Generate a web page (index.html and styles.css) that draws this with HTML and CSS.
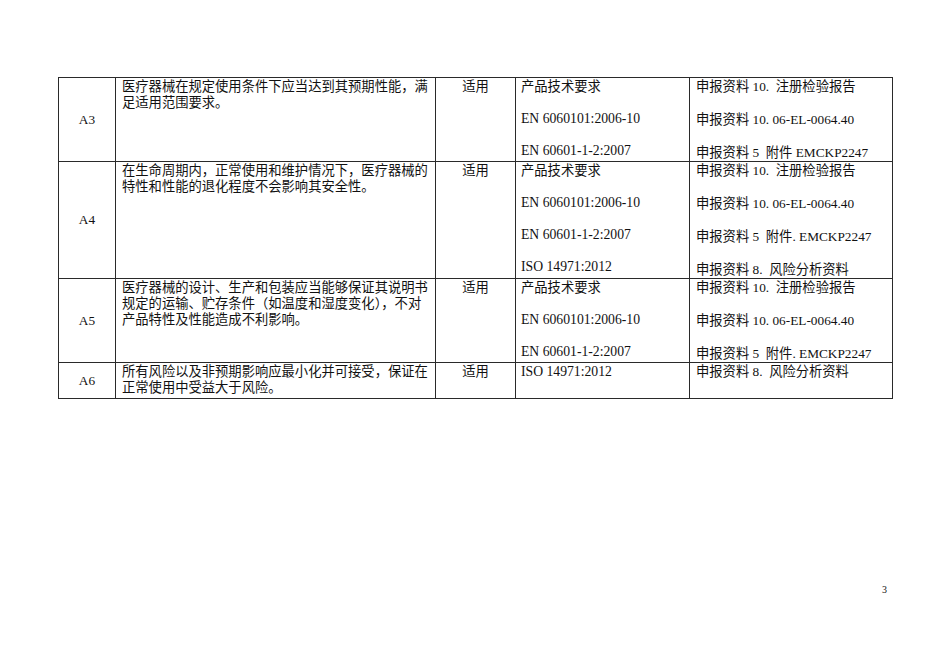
FILE: index.html
```html
<!DOCTYPE html>
<html lang="zh-CN">
<head>
<meta charset="utf-8">
<title>符合性对照表</title>
<link rel="stylesheet" href="styles.css">
</head>
<body>
<div class="page">
  <table class="grid">
    <colgroup>
      <col class="c-id">
      <col class="c-desc">
      <col class="c-app">
      <col class="c-std">
      <col class="c-doc">
    </colgroup>
    <tbody>
      <tr class="r-a3">
        <td class="id">A3</td>
        <td class="desc">医疗器械在规定使用条件下应当达到其预期性能，满<br>足适用范围要求。</td>
        <td class="app">适用</td>
        <td class="std"><p>产品技术要求</p><p class="lat">EN 6060101:2006-10</p><p class="lat">EN 60601-1-2:2007</p></td>
        <td class="doc"><p>申报资料 10.&nbsp; 注册检验报告</p><p>申报资料 10. 06-EL-0064.40</p><p class="last">申报资料 5&nbsp; 附件 EMCKP2247</p></td>
      </tr>
      <tr class="r-a4">
        <td class="id">A4</td>
        <td class="desc">在生命周期内，正常使用和维护情况下，医疗器械的<br>特性和性能的退化程度不会影响其安全性。</td>
        <td class="app">适用</td>
        <td class="std"><p>产品技术要求</p><p class="lat">EN 6060101:2006-10</p><p class="lat">EN 60601-1-2:2007</p><p class="lat">ISO 14971:2012</p></td>
        <td class="doc"><p>申报资料 10.&nbsp; 注册检验报告</p><p>申报资料 10. 06-EL-0064.40</p><p>申报资料 5&nbsp; 附件. EMCKP2247</p><p class="last">申报资料 8.&nbsp; 风险分析资料</p></td>
      </tr>
      <tr class="r-a5">
        <td class="id">A5</td>
        <td class="desc">医疗器械的设计、生产和包装应当能够保证其说明书<br>规定的运输、贮存条件（如温度和湿度变化），不对<br>产品特性及性能造成不利影响。</td>
        <td class="app">适用</td>
        <td class="std"><p>产品技术要求</p><p class="lat">EN 6060101:2006-10</p><p class="lat">EN 60601-1-2:2007</p></td>
        <td class="doc"><p>申报资料 10.&nbsp; 注册检验报告</p><p>申报资料 10. 06-EL-0064.40</p><p class="last">申报资料 5&nbsp; 附件. EMCKP2247</p></td>
      </tr>
      <tr class="r-a6">
        <td class="id">A6</td>
        <td class="desc">所有风险以及非预期影响应最小化并可接受，保证在<br>正常使用中受益大于风险。</td>
        <td class="app">适用</td>
        <td class="std"><p class="lat">ISO 14971:2012</p></td>
        <td class="doc"><p>申报资料 8.&nbsp; 风险分析资料</p></td>
      </tr>
    </tbody>
  </table>
  <div class="pageno">3</div>
</div>
</body>
</html>
```

FILE: styles.css
```css
html, body {
  margin: 0;
  padding: 0;
  background: #ffffff;
}

.page {
  width: 950px;
  height: 672px;
  box-sizing: border-box;
  padding: 77px 0 0 58px;
  font-family: "Liberation Serif", "Noto Sans CJK SC", serif;
  color: #111111;
}

.grid {
  border-collapse: collapse;
  table-layout: fixed;
  width: 834px;
  font-size: 13.3px;
  line-height: 16px;
}

.c-id { width: 57px; }
.c-desc { width: 320px; }
.c-app { width: 80px; }
.c-std { width: 174px; }
.c-doc { width: 203px; }

.grid td {
  border: 1px solid #2a2a2a;
  padding: 1px 6px 0 6px;
  vertical-align: top;
  white-space: nowrap;
  overflow: hidden;
}

.grid td.id {
  vertical-align: middle;
  text-align: center;
  padding: 0;
}

.grid td.app {
  text-align: center;
}

.grid td.std {
  padding-left: 5px;
}

.grid td.doc {
  padding-left: 6px;
}

.grid p {
  margin: 0 0 16px 0;
}

.grid p.lat {
  font-size: 13.7px;
}

.grid td.doc p {
  margin-bottom: 17px;
}

.grid td p:last-child,
.grid td.doc p.last {
  margin-bottom: 0;
}

.r-a3 td { height: 84px; box-sizing: border-box; }
.r-a4 td { height: 116px; box-sizing: border-box; }
.r-a5 td { height: 83px; box-sizing: border-box; }
.r-a6 td { height: 36px; box-sizing: border-box; }

.pageno {
  width: 834px;
  margin-top: 185px;
  box-sizing: border-box;
  padding-right: 5px;
  text-align: right;
  font-size: 10px;
  line-height: 12px;
}
```
